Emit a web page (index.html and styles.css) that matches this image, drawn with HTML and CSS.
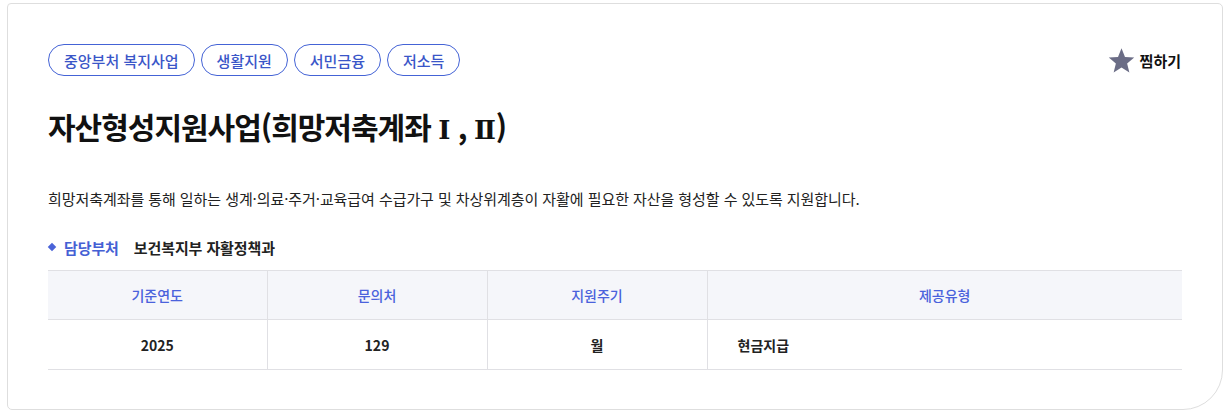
FILE: index.html
```html
<!DOCTYPE html>
<html lang="ko">
<head>
<meta charset="utf-8">
<link rel="stylesheet" href="styles.css">
</head>
<body>
<div class="card">
  <div class="top">
    <div class="tags">
      <span class="tag">중앙부처 복지사업</span>
      <span class="tag">생활지원</span>
      <span class="tag">서민금융</span>
      <span class="tag">저소득</span>
    </div>
    <button class="fav">
      <svg width="27" height="27" viewBox="0 0 24 24"><path fill="#6b6d86" d="M12 1.2l3.1 7.6 8.2.6-6.3 5.3 2 8-7-4.4-7 4.4 2-8L.7 9.4l8.2-.6z"/></svg>
      <span>찜하기</span>
    </button>
  </div>
  <h1 class="title">자산형성지원사업(희망저축계좌 <span class="roman">Ⅰ</span> , <span class="roman">Ⅱ</span>)</h1>
  <p class="desc">희망저축계좌를 통해 일하는 생계·의료·주거·교육급여 수급가구 및 차상위계층이 자활에 필요한 자산을 형성할 수 있도록 지원합니다.</p>
  <div class="dept">
    <span class="bullet"></span>
    <span class="dept-label">담당부처</span>
    <span class="dept-name">보건복지부 자활정책과</span>
  </div>
  <table class="info">
    <thead>
      <tr><th class="c1">기준연도</th><th class="c2">문의처</th><th class="c3">지원주기</th><th class="c4">제공유형</th></tr>
    </thead>
    <tbody>
      <tr><td>2025</td><td>129</td><td>월</td><td class="left">현금지급</td></tr>
    </tbody>
  </table>
</div>
</body>
</html>
```

FILE: styles.css
```css
* { box-sizing: border-box; }
html, body { margin: 0; padding: 0; background: #fff; }
body {
  font-family: "Noto Sans CJK KR", "Noto Sans", sans-serif;
  color: #111;
}
.card {
  margin: 3px 0 0 7px;
  width: 1216px;
  height: 407px;
  border: 1px solid #dedede;
  border-radius: 4px 5px 40px 5px;
  padding: 40px 41px 0 40px;
}
.top {
  display: flex;
  justify-content: space-between;
  align-items: center;
}
.tags { display: flex; gap: 6px; }
.tag {
  display: inline-flex;
  align-items: center;
  height: 32px;
  padding: 0 15px;
  border: 1px solid #4463d6;
  border-radius: 16px;
  color: #3a56c8;
  font-size: 15px;
  font-weight: 500;
  letter-spacing: 0;
}
.fav {
  display: flex;
  align-items: center;
  gap: 5px;
  border: 0;
  background: none;
  padding: 0;
  font-family: inherit;
  font-size: 15px;
  font-weight: 700;
  color: #111;
}
.title {
  margin: 28px 0 0;
  font-size: 30px;
  font-weight: 700;
  letter-spacing: -1px;
  line-height: 44px;
  height: 44px;
}
.roman {
  font-family: "DejaVu Serif", "Liberation Serif", serif;
  font-size: 26px;
  letter-spacing: 0;
  line-height: 1;
}
.desc {
  margin: 39px 0 0;
  font-size: 15px;
  line-height: 24px;
  color: #222;
  letter-spacing: -0.07px;
}
.dept {
  display: flex;
  align-items: center;
  margin-top: 25px;
  font-size: 15px;
  font-weight: 700;
  height: 22px;
  letter-spacing: -0.1px;
}
.bullet {
  width: 6px;
  height: 6px;
  background: #4a63d8;
  transform: rotate(45deg);
  margin: 0 9px 0 1px;
}
.dept-label { color: #4560d4; margin-right: 15px; }
.dept-name { color: #222; }
.info {
  margin-top: 12px;
  width: 1134px;
  border-collapse: collapse;
  font-size: 14px;
}
.info th, .info td {
  height: 49px;
  text-align: center;
  border-top: 1px solid #e0e0e4;
  border-bottom: 1px solid #e0e0e4;
  border-left: 1px solid #e0e0e4;
  padding: 0;
}
.info td { height: 50px; }
.info th:first-child, .info td:first-child { border-left: 0; }
.info th {
  background: #f5f6fa;
  color: #4a62dc;
  font-weight: 500;
}
.info td {
  font-weight: 700;
  color: #222;
}
.info td.left { text-align: left; padding-left: 30px; }
.c1 { width: 219px; }
.c2, .c3 { width: 220px; }
```
